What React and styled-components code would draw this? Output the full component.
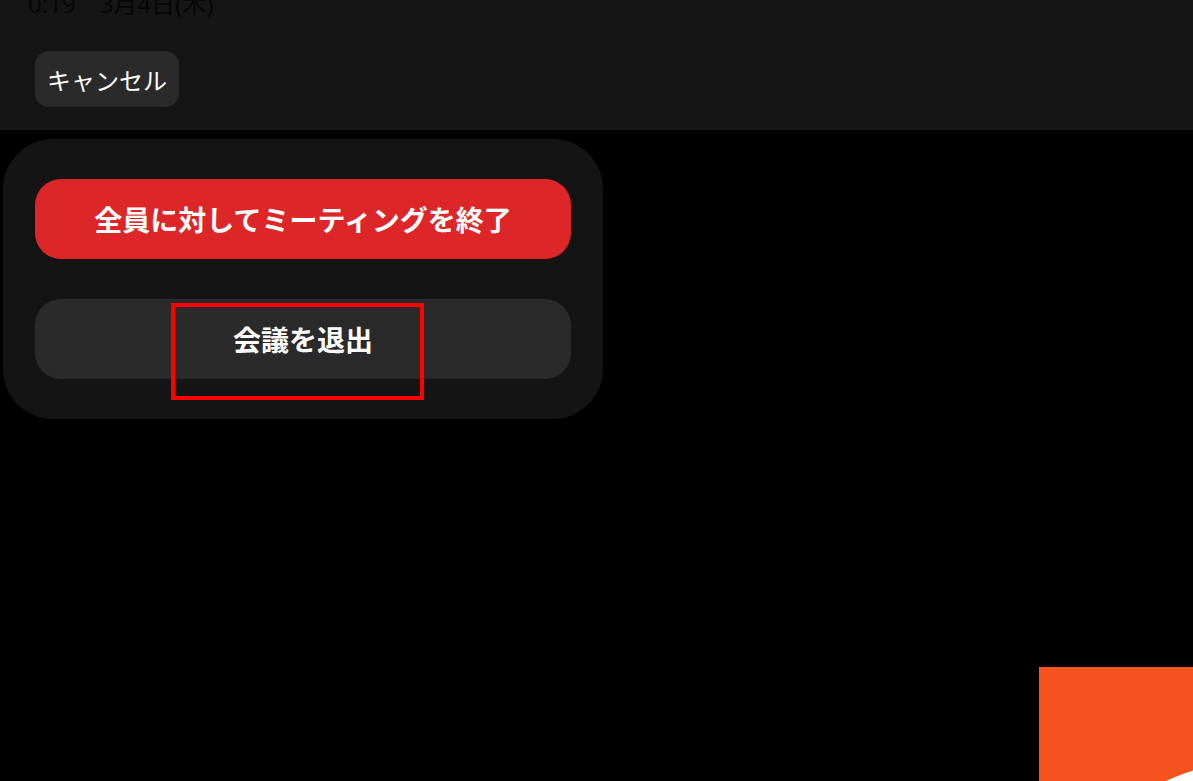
import React from 'react';
import styled, { createGlobalStyle } from 'styled-components';

const GlobalStyle = createGlobalStyle`
  html, body {
    margin: 0;
    padding: 0;
    background: #000;
    overflow: hidden;
  }
  body {
    font-family: "Noto Sans CJK JP", "Noto Sans", sans-serif;
  }
`;

const Page = styled.div`
  width: 1193px;
  height: 781px;
  display: flex;
  flex-direction: column;
  background: #000;
  overflow: hidden;
`;

const TopBar = styled.header`
  height: 130px;
  background: #151515;
  padding: 0 28px 0 35px;
  box-sizing: border-box;
  display: flex;
  flex-direction: column;
`;

const Clock = styled.div`
  margin: -9px 0 0 -7px;
  height: 26px;
  display: flex;
  gap: 24px;
  font-family: "Noto Sans", "Noto Sans CJK JP", sans-serif;
  font-size: 24px;
  line-height: 26px;
  color: #070707;
  white-space: pre;
`;

const CancelButton = styled.button`
  margin-top: 34px;
  align-self: flex-start;
  height: 56px;
  padding: 0 12px;
  border: none;
  border-radius: 14px;
  background: #2a2a2a;
  color: #fff;
  font-family: "Noto Sans CJK JP", sans-serif;
  font-size: 24px;
  font-weight: 400;
`;

const Stage = styled.main`
  flex: 1;
  display: flex;
  flex-direction: column;
  padding: 9px 0 0 3px;
`;

const Sheet = styled.section`
  width: 600px;
  height: 280px;
  box-sizing: border-box;
  padding: 40px 32px;
  background: #141414;
  border-radius: 50px;
  display: flex;
  flex-direction: column;
  gap: 40px;
`;

const Action = styled.button`
  position: relative;
  height: 80px;
  border: none;
  border-radius: 26px;
  background: ${p => (p.$danger ? '#dc2628' : '#2a2a2a')};
  color: #fff;
  font-family: "Noto Sans CJK JP", sans-serif;
  font-size: 28px;
  font-weight: 700;
  padding: 0;
  display: flex;
  align-items: center;
  justify-content: center;
`;

const Highlight = styled.span`
  position: absolute;
  left: 136px;
  top: 4px;
  width: 253px;
  height: 97px;
  box-sizing: border-box;
  border: 4px solid #ff0000;
  pointer-events: none;
`;

const Tile = styled.div`
  position: relative;
  margin-top: auto;
  align-self: flex-end;
  width: 154px;
  height: 114px;
  background: #f5521f;
  overflow: hidden;
`;

const Blob = styled.span`
  position: absolute;
  left: -10px;
  top: 92px;
  width: 473px;
  height: 473px;
  border-radius: 50%;
  background: #fff;
`;

export default function App() {
  return (
    <Page>
      <GlobalStyle />
      <TopBar>
        <Clock>
          <span>0:19</span>
          <span>3月4日(木)</span>
        </Clock>
        <CancelButton>キャンセル</CancelButton>
      </TopBar>
      <Stage>
        <Sheet>
          <Action $danger>全員に対してミーティングを終了</Action>
          <Action>
            会議を退出
            <Highlight />
          </Action>
        </Sheet>
        <Tile>
          <Blob />
        </Tile>
      </Stage>
    </Page>
  );
}
